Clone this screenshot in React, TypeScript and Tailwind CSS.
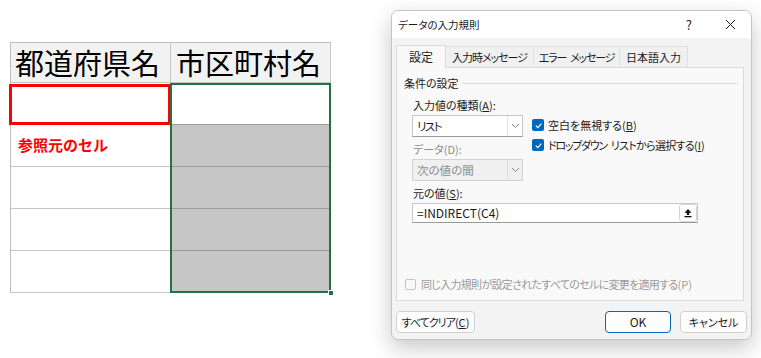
import React from "react";

const jp = "font-['Noto_Sans_CJK_JP','Noto_Sans',sans-serif]";

const Check = () => (
  <span className="w-[12px] h-[12px] rounded-[2px] bg-[#0067c0] flex items-center justify-center shrink-0">
    <svg width="9" height="9" viewBox="0 0 10 10">
      <path d="M2 5.2 L4.2 7.3 L8.2 2.8" fill="none" stroke="#fff" strokeWidth="1.3" />
    </svg>
  </span>
);

const Chevron = () => (
  <svg width="9" height="6" viewBox="0 0 9 6">
    <path d="M1 1 L4.5 4.5 L8 1" fill="none" stroke="#8a8a8a" strokeWidth="1" />
  </svg>
);

const Sheet = () => {
  const cell = "h-[42px] border-r border-b border-[#c6c6c6]";
  return (
    <div className={`ml-[10px] mt-[42px] flex border-l border-t border-[#bdbdbd] ${jp}`}>
      {/* column B */}
      <div className="flex flex-col w-[160px]">
        <div className="h-[40px] bg-[#f2f2f2] border-r border-b border-[#c6c6c6] flex items-center pl-[4px] text-[29px] leading-none text-black">
          都道府県名
        </div>
        <div className={`${cell} relative`}>
          <div className="absolute -left-[2px] top-[1px] -right-[1px] -bottom-[1px] border-[3px] border-[#ff0000]" />
        </div>
        <div className={`${cell} flex items-center pl-[7px] text-[15px] font-bold text-[#ff0000]`}>
          参照元のセル
        </div>
        <div className={cell} />
        <div className={cell} />
        <div className={cell} />
      </div>
      {/* column C */}
      <div className="flex flex-col w-[160px]">
        <div className="h-[40px] bg-[#f2f2f2] border-r border-b border-[#c6c6c6] flex items-center pl-[5px] text-[29px] leading-none text-black">
          市区町村名
        </div>
        <div className="relative flex flex-col">
          <div className="h-[42px] bg-white border-b border-[#9c9c9c]" />
          <div className="h-[42px] bg-[#c6c6c6] border-b border-[#9c9c9c]" />
          <div className="h-[42px] bg-[#c6c6c6] border-b border-[#9c9c9c]" />
          <div className="h-[42px] bg-[#c6c6c6] border-b border-[#9c9c9c]" />
          <div className="h-[42px] bg-[#c6c6c6] border-b border-[#9c9c9c]" />
          <div className="absolute -left-px top-0 right-0 bottom-0 border-2 border-[#217346]" />
          <div className="absolute -right-[3px] -bottom-[3px] w-[6px] h-[6px] bg-[#217346] border border-white" />
        </div>
      </div>
    </div>
  );
};

const Dialog = () => (
  <div
    className={`ml-[60px] mt-[10px] w-[361px] h-[330px] rounded-[7px] border border-[#c4c4c4] bg-[#f3f3f3] shadow-[0_8px_22px_rgba(0,0,0,0.22)] flex flex-col overflow-hidden text-[11px] leading-[14px] text-[#1b1b1b] ${jp} [font-feature-settings:'palt']`}
  >
    {/* title bar */}
    <div className="h-[27px] bg-white flex items-center pl-[6px] shrink-0">
      <span className="flex-1 text-[10.5px]">データの入力規則</span>
      <span className="text-[13px] mr-[33px]">?</span>
      <svg width="11" height="11" viewBox="0 0 11 11" className="mr-[15px]">
        <path d="M1 1 L10 10 M10 1 L1 10" stroke="#1b1b1b" strokeWidth="1" />
      </svg>
    </div>

    <div className="flex-1 flex flex-col px-[4px] pt-[6px]">
      {/* tabs */}
      <div className="flex items-end h-[23px]">
        <div className="h-[23px] w-[50px] bg-[#f9f9f9] border border-b-0 border-[#dadada] flex items-center justify-center relative z-10 -mb-px pb-px text-[12px]">
          設定
        </div>
        <div className="h-[21px] w-[88px] bg-[#f0f0f0] border border-l-0 border-b-0 border-[#e0e0e0] flex items-center justify-center tracking-[-1px]">
          入力時メッセージ
        </div>
        <div className="h-[21px] w-[86px] bg-[#f0f0f0] border border-l-0 border-b-0 border-[#e0e0e0] flex items-center justify-center gap-[4px] tracking-[-1.2px]">
          <span>エラー</span>
          <span>メッセージ</span>
        </div>
        <div className="h-[21px] w-[68px] bg-[#f0f0f0] border border-l-0 border-b-0 border-[#e0e0e0] flex items-center justify-center">
          日本語入力
        </div>
      </div>

      {/* panel */}
      <div className="w-[348px] h-[234px] bg-[#f9f9f9] border border-[#dadada] flex flex-col">
        <div className="mt-[8px] h-[14px] flex items-center pl-[7px] pr-[5px]">
          <span>条件の設定</span>
          <span className="flex-1 h-px bg-[#dcdcdc] ml-[4px]" />
        </div>

        <div className="pl-[15px] flex flex-col">
          <div className="mt-[8px] h-[14px] pl-px">
            入力値の種類(<span className="underline">A</span>):
          </div>
          <div className="mt-[3px] flex">
            <div className="flex flex-col w-[111px]">
              <div className="h-[22px] bg-white border border-[#c8c8c8] border-b-[#9a9a9a] flex items-center">
                <span className="flex-1 pl-[4px] text-[11.5px] tracking-[-1.5px]">リスト</span>
                <span className="w-[15px] h-full border-l border-[#e2e2e2] flex items-center justify-center">
                  <Chevron />
                </span>
              </div>
              <div className="mt-[5px] h-[14px] pl-px text-[#8c8c8c]">データ(D):</div>
              <div className="mt-[3px] h-[22px] bg-[#f0f0f0] border border-[#d2d2d2] flex items-center">
                <span className="flex-1 pl-[4px] text-[#8c8c8c] text-[11.5px]">次の値の間</span>
                <span className="w-[15px] h-full border-l border-[#dcdcdc] flex items-center justify-center">
                  <Chevron />
                </span>
              </div>
            </div>
            <div className="ml-[9px] flex flex-col">
              <div className="mt-[4px] h-[12px] flex items-center gap-[4px]">
                <Check />
                <span>
                  空白を無視する(<span className="underline">B</span>)
                </span>
              </div>
              <div className="mt-[8px] h-[12px] flex items-center">
                <Check />
                <span className="ml-[4px] tracking-[-1.3px]">ドロップダウン</span>
                <span className="ml-[4px] tracking-[-0.7px]">リストから選択する</span>
                <span>
                  (<span className="underline">I</span>)
                </span>
              </div>
            </div>
          </div>
          <div className="mt-[5px] h-[14px] pl-px">
            元の値(<span className="underline">S</span>):
          </div>
          <div className="mt-[3px] w-[286px] h-[20px] bg-white border border-[#c8c8c8] border-b-[#9a9a9a] flex items-center">
            <span className="flex-1 pl-[4px] text-[12px] [font-feature-settings:normal]">=INDIRECT(C4)</span>
            <span className="w-[18px] h-[18px] border border-[#d5d5d5] rounded-[3px] bg-white flex items-center justify-center">
              <svg width="10" height="10" viewBox="0 0 10 10">
                <path d="M5 1 L8.6 4.8 H6.2 V7 H3.8 V4.8 H1.4 Z" fill="#111" />
                <rect x="1.5" y="8" width="7" height="1.3" fill="#111" />
              </svg>
            </span>
          </div>
        </div>

        <div className="mt-auto mb-[9px] h-[14px] pl-[8px] flex items-center gap-[5px] text-[#9a9a9a]">
          <span className="w-[11px] h-[11px] rounded-[2px] border border-[#c4c4c4] bg-[#f9f9f9]" />
          <span>
            <span className="tracking-[-0.7px]">同じ入力規則が設定されたすべてのセルに変更を適用する</span>(P)
          </span>
        </div>
      </div>

      {/* buttons */}
      <div className="mt-[10px] flex items-center">
        <div className="w-[79px] h-[22px] rounded-[4px] border border-[#d0d0d0] bg-[#fdfdfd] flex items-center justify-center">
          <span className="tracking-[-1px]">すべてクリア</span>(<span className="underline">C</span>)
        </div>
        <div className="flex-1" />
        <div className="w-[66px] h-[22px] rounded-[4px] border border-[#0067c0] bg-[#fdfdfd] flex items-center justify-center text-[12px]">
          OK
        </div>
        <div className="ml-[9px] w-[67px] h-[22px] rounded-[4px] border border-[#d0d0d0] bg-[#fdfdfd] flex items-center justify-center">
          キャンセル
        </div>
      </div>
    </div>
  </div>
);

export default function App() {
  return (
    <div className="w-[761px] h-[358px] bg-white flex items-start overflow-hidden">
      <Sheet />
      <Dialog />
    </div>
  );
}
